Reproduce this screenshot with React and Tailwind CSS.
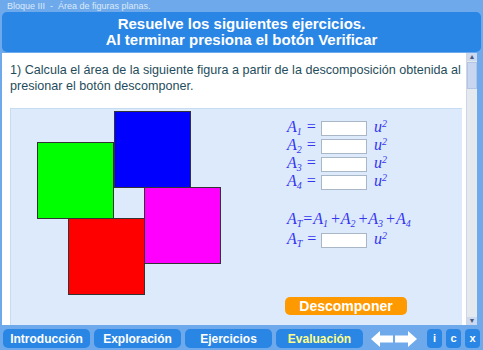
import React from 'react';

const Sub = ({ children }) => <span className="text-[10px] relative top-[3px]">{children}</span>;

const Row = ({ label }) => (
  <div className="flex items-center h-[18px]">
    <span className="w-[34px] text-[16px] italic leading-[18px]">A<Sub>{label}</Sub> =</span>
    <span className="w-[46px] h-[15px] bg-white border border-[#a9b6c6]" />
    <span className="ml-[7px] text-[16px] italic leading-[18px]">
      u<span className="text-[10px] relative top-[-5px]">2</span>
    </span>
  </div>
);

const NavBtn = ({ label, active }) => (
  <button
    className={`w-[88px] h-[19px] rounded-[5px] bg-[#2a86e5] text-[12px] font-bold ${active ? 'text-[#ffff88]' : 'text-white'}`}
  >
    {label}
  </button>
);

const SmallBtn = ({ label }) => (
  <button className="w-[15px] h-[19px] rounded-[4px] bg-[#2a86e5] text-white text-[11px] font-bold">
    {label}
  </button>
);

export default function App() {
  return (
    <div className="w-[483px] h-[350px] bg-[#6ea9ec] flex flex-col overflow-hidden font-['Liberation_Sans',Arial,sans-serif]">
      {/* top strip */}
      <div className="h-[12px] pl-[7px] text-[9px] leading-[12px] text-[#dde9f7]">
        Bloque III &nbsp;- &nbsp;Área de figuras planas.
      </div>

      {/* title */}
      <div className="mx-[2px] h-[40px] rounded-[5px] bg-[#2a86e5] text-white font-bold text-[15px] leading-[16px] flex flex-col items-center justify-center">
        <div>Resuelve los siguientes ejercicios.</div>
        <div>Al terminar presiona el botón Verificar</div>
      </div>

      {/* content */}
      <div className="mt-[1px] ml-[2px] flex h-[272px]">
        <div className="w-[464px] bg-white pt-[9px] flex flex-col">
          <p className="pl-[8px] pr-0 text-[12.6px] leading-[16px] text-[#1f4d5c]">
            1) Calcula el área de la siguiente figura a partir de la descomposición obtenida al presionar el botón descomponer.
          </p>
          <div className="mt-[14px] ml-[8px] w-[452px] flex-1 bg-[#dceafc] border-l border-t border-[#c6dcf3] relative">
            {/* shapes on canvas */}
            <div className="absolute left-[103px] top-[2px] w-[77px] h-[77px] bg-[#0000ff] border border-[#333]" />
            <div className="absolute left-[26px] top-[33px] w-[77px] h-[77px] bg-[#00ff00] border border-[#333]" />
            <div className="absolute left-[133px] top-[78px] w-[77px] h-[77px] bg-[#ff00ff] border border-[#333]" />
            <div className="absolute left-[57px] top-[109px] w-[77px] h-[77px] bg-[#ff0000] border border-[#333]" />

            <div className="absolute left-[276px] top-[10px] text-[#3535f0] font-['Liberation_Serif',serif]">
              <Row label="1" />
              <Row label="2" />
              <Row label="3" />
              <Row label="4" />
              <div className="mt-[20px] h-[18px] flex items-center text-[16px] italic leading-[18px] whitespace-nowrap">
                <span>A<Sub>T</Sub></span>
                <span>=A<Sub>1</Sub></span>
                <span className="ml-[2px]">+A<Sub>2</Sub></span>
                <span className="ml-[2px]">+A<Sub>3</Sub></span>
                <span className="ml-[2px]">+A<Sub>4</Sub></span>
              </div>
              <div className="mt-[2px]">
                <Row label="T" />
              </div>
            </div>

            <button className="absolute left-[274px] top-[188px] w-[122px] h-[18px] rounded-[5px] bg-[#ff9900] text-white font-bold text-[14px] leading-[18px]">
              Descomponer
            </button>
          </div>
        </div>
        {/* scrollbar */}
        <div className="w-[11px] bg-[#e4e8ef] flex flex-col border-l border-[#d0d6df]">
          <div className="h-[8px] bg-[#cdd9ee] text-[7px] leading-[8px] text-center text-[#4a5a80]">▲</div>
          <div className="h-[27px] mt-[1px] bg-[#c9d6f0] border border-[#b4c4e4]" />
          <div className="flex-1" />
          <div className="h-[8px] bg-[#cdd9ee] text-[7px] leading-[8px] text-center text-[#4a5a80]">▼</div>
        </div>
      </div>

      {/* bottom nav */}
      <div className="mt-[4px] px-[3px] flex items-center gap-[4px]">
        <NavBtn label="Introducción" />
        <NavBtn label="Exploración" />
        <NavBtn label="Ejercicios" />
        <NavBtn label="Evaluación" active />
        <div className="ml-[4px] flex items-center gap-[2px]">
          <svg width="22" height="16" viewBox="0 0 22 16">
            <path d="M0 8 L9 0 L9 4.5 L22 4.5 L22 11.5 L9 11.5 L9 16 Z" fill="#fff" />
          </svg>
          <svg width="22" height="16" viewBox="0 0 22 16">
            <path d="M22 8 L13 0 L13 4.5 L0 4.5 L0 11.5 L13 11.5 L13 16 Z" fill="#fff" />
          </svg>
        </div>
        <div className="ml-[6px] flex gap-[4px]">
          <SmallBtn label="i" />
          <SmallBtn label="c" />
          <SmallBtn label="x" />
        </div>
      </div>
    </div>
  );
}
